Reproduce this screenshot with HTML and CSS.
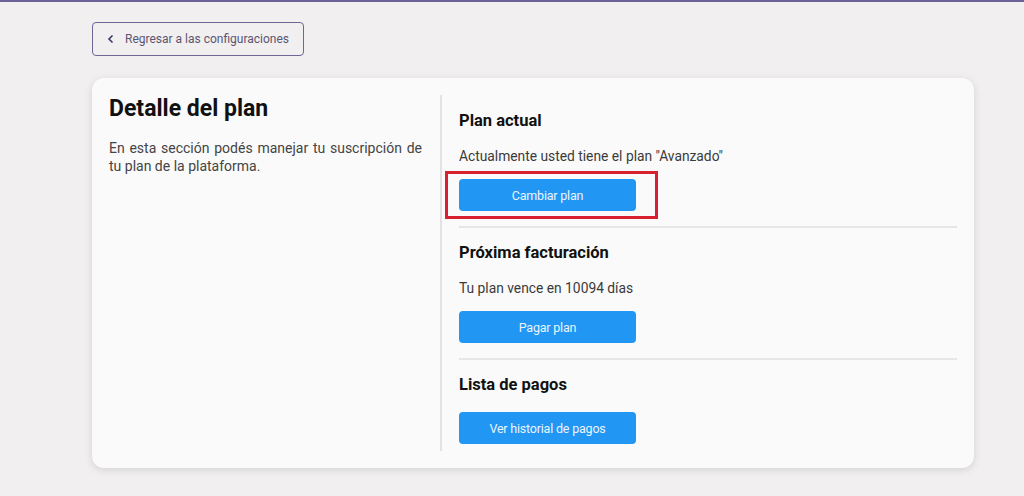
FILE: index.html
```html
<!DOCTYPE html>
<html lang="es">

<head>
    <meta charset="UTF-8" />
    <meta name="viewport" content="width=device-width, initial-scale=1.0" />
    <title>Detalle del plan</title>
    <link rel="stylesheet" href="styles.css">
</head>

<body>
    <div class="page">
        <a href="#" class="back-btn">
            <svg width="8" height="10" viewBox="0 0 8 10" aria-hidden="true">
                <path d="M5.5 1.5 L2 5 L5.5 8.5" fill="none" stroke="#3f3866" stroke-width="1.6" />
            </svg>
            <span>Regresar a las configuraciones</span>
        </a>

        <div class="card">
            <div class="card-left">
                <h1>Detalle del plan</h1>
                <p class="desc">En esta sección podés manejar tu suscripción de tu plan de la plataforma.</p>
            </div>

            <div class="card-right">
                <div class="section">
                    <h2>Plan actual</h2>
                    <p>Actualmente usted tiene el plan "Avanzado"</p>
                    <div class="highlight">
                        <button type="button">Cambiar plan</button>
                    </div>
                </div>

                <div class="section">
                    <h2>Próxima facturación</h2>
                    <p>Tu plan vence en 10094 días</p>
                    <button type="button">Pagar plan</button>
                </div>

                <div class="section">
                    <h2>Lista de pagos</h2>
                    <button type="button">Ver historial de pagos</button>
                </div>
            </div>
        </div>
    </div>
</body>

</html>
```

FILE: styles.css
```css
* {
    margin: 0;
    padding: 0;
    box-sizing: border-box;
}

body {
    background-color: #f1eff0;
    border-top: 2px solid #6c6399;
    font-family: Roboto, 'Liberation Sans', sans-serif;
    color: #222;
    height: 100vh;
}

.page {
    padding: 20px 0 0 92px;
}

.back-btn {
    display: inline-flex;
    align-items: center;
    gap: 10px;
    height: 34px;
    width: 212px;
    padding-left: 14px;
    border: 1px solid #6e6697;
    border-radius: 4px;
    color: #5b5573;
    font-size: 12px;
    white-space: nowrap;
    text-decoration: none;
}

.card {
    display: flex;
    width: 882px;
    margin-top: 22px;
    padding: 17px;
    background-color: #fafafa;
    border-radius: 12px;
    box-shadow: 0 2px 8px rgba(0, 0, 0, 0.12);
}

.card-left {
    width: 331px;
    padding-right: 18px;
}

.card-left h1 {
    font-size: 23px;
    line-height: 26px;
    margin-top: 1px;
    font-weight: 700;
    color: #111;
}

.desc {
    margin-top: 17px;
    font-size: 14px;
    line-height: 18px;
    color: #444;
    text-align: justify;
}

.card-right {
    flex: 1;
    border-left: 2px solid #e2e2e2;
    padding-left: 17px;
}

.section {
    padding: 15px 0;
}

.section + .section {
    border-top: 2px solid #e6e6e6;
    padding-top: 14px;
}

.section:last-child {
    padding-bottom: 7px;
}

.section h2 {
    font-size: 16.5px;
    line-height: 22px;
    font-weight: 700;
    color: #111;
    margin-bottom: 14px;
}

.section:last-child h2 {
    margin-bottom: 16px;
}

.section p {
    font-size: 13.8px;
    line-height: 20px;
    color: #3a3a3a;
    margin-bottom: 13px;
}

.section button {
    display: block;
    width: 177px;
    height: 32px;
    border: none;
    border-radius: 4px;
    background-color: #2196f3;
    color: #eaf4fe;
    font-family: Roboto, 'Liberation Sans', sans-serif;
    font-size: 12.5px;
    letter-spacing: -0.2px;
    cursor: pointer;
}

.highlight {
    position: relative;
    width: 177px;
}

.highlight::after {
    content: '';
    position: absolute;
    left: -14px;
    top: -8px;
    width: 213px;
    height: 48px;
    box-sizing: border-box;
    border: 3px solid #d7212e;
}
```
